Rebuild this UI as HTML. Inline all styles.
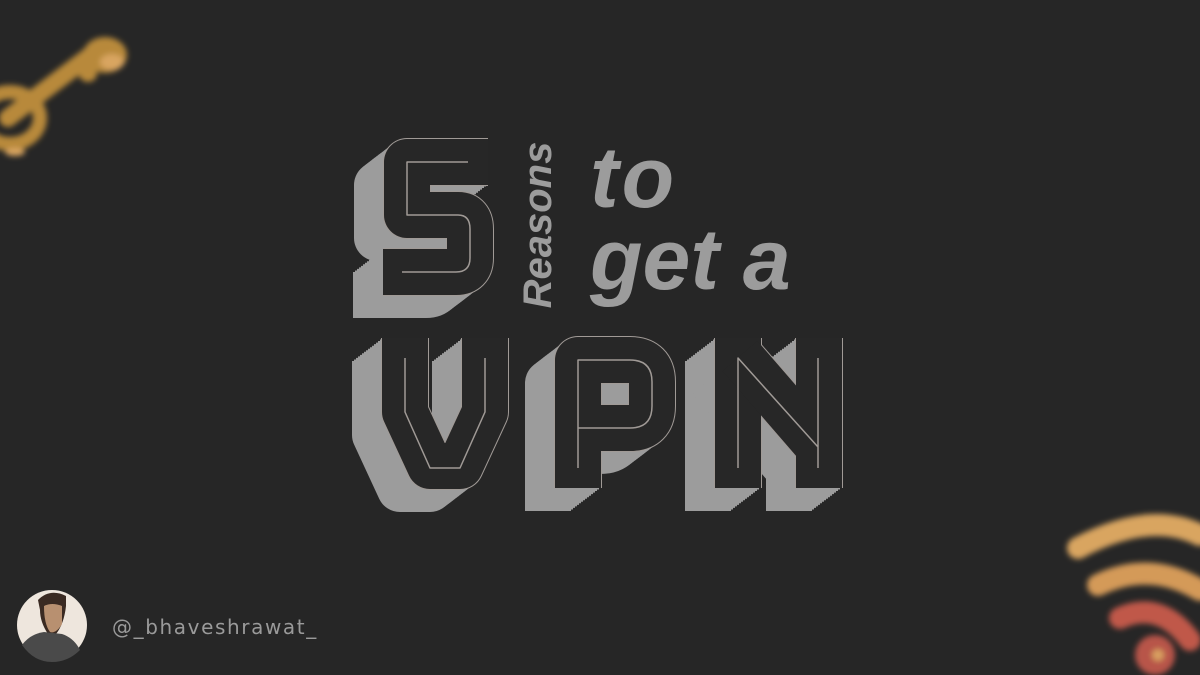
<!DOCTYPE html>
<html><head><meta charset="utf-8"><style>
html,body{margin:0;padding:0;background:#262626;}
body{width:1200px;height:675px;overflow:hidden;position:relative;font-family:"Liberation Sans",sans-serif;}
.t{position:absolute;color:#9c9c9c;font-weight:bold;font-style:italic;white-space:nowrap;line-height:1;}
</style></head><body>
<svg width="1200" height="675" style="position:absolute;left:0;top:0">
<defs>
<filter id="bl" x="-50%" y="-50%" width="200%" height="200%"><feGaussianBlur stdDeviation="3"/></filter>
<g id="S">
<path d="M488,162 H407 V215 H458 Q470,215 470,229 V258 Q470,272 456,272 H383"/>
<path d="M405,338 V412 L430,466 H460 L485,412 V338"/>
<path d="M578,488 V360 H630 Q652,360 652,382 V406 Q652,428 630,428 H578"/>
<path d="M738,488 V338"/>
<path d="M740,356 L818,446"/>
<path d="M819,338 V488"/>
</g>
</defs>
<!-- key -->
<g filter="url(#bl)">
<path d="M8,118 L100,48" stroke="#b8893a" stroke-width="18" stroke-linecap="round" fill="none"/>
<ellipse cx="105" cy="55" rx="22" ry="18" fill="#b8893a"/>
<ellipse cx="112" cy="62" rx="12" ry="8" fill="#d9a560"/>
<ellipse cx="88" cy="74" rx="9" ry="8" fill="#b8893a"/>
<ellipse cx="10" cy="118" rx="30" ry="26" fill="none" stroke="#b8893a" stroke-width="14"/>
<ellipse cx="15" cy="152" rx="10" ry="4" fill="#d9a560"/>
</g>
<!-- wifi -->
<g filter="url(#bl)" fill="none" stroke-linecap="round">
<path d="M1078,548 Q1150,510 1200,535" stroke="#d9a560" stroke-width="22"/>
<path d="M1098,585 Q1150,560 1200,590" stroke="#d49a58" stroke-width="22"/>
<path d="M1120,618 Q1160,600 1190,640" stroke="#c0584a" stroke-width="22"/>
<circle cx="1155" cy="655" r="20" fill="#b8544a" stroke="none"/>
<circle cx="1158" cy="655" r="6" fill="#d9a060" stroke="none"/>
</g>
<!-- extrusion -->
<g fill="none" stroke="#9c9c9c" stroke-width="46" stroke-linejoin="round" stroke-linecap="butt">
<use href="#S" transform="translate(-2,1.5)"/>
<use href="#S" transform="translate(-4,3)"/>
<use href="#S" transform="translate(-6,4.6)"/>
<use href="#S" transform="translate(-8,6.1)"/>
<use href="#S" transform="translate(-10,7.7)"/>
<use href="#S" transform="translate(-12,9.2)"/>
<use href="#S" transform="translate(-14,10.7)"/>
<use href="#S" transform="translate(-16,12.3)"/>
<use href="#S" transform="translate(-18,13.8)"/>
<use href="#S" transform="translate(-20,15.3)"/>
<use href="#S" transform="translate(-22,16.9)"/>
<use href="#S" transform="translate(-24,18.4)"/>
<use href="#S" transform="translate(-26,19.9)"/>
<use href="#S" transform="translate(-28,21.5)"/>
<use href="#S" transform="translate(-30,23)"/>
</g>
<rect x="596" y="376" width="38" height="38" fill="#9c9c9c"/>
<!-- front -->
<g fill="none" stroke="#a09a96" stroke-width="48" stroke-linejoin="round" stroke-linecap="butt"><use href="#S"/></g>
<g fill="none" stroke="#272727" stroke-width="46" stroke-linejoin="round" stroke-linecap="butt"><use href="#S"/></g>
<!-- inlines -->
<g fill="none" stroke="#a09a96" stroke-width="1.5" stroke-linejoin="round">
<path d="M468,162 H407 V215 H458 Q470,215 470,229 V258 Q470,272 456,272 H402"/>
<path d="M405,358 V412 L430,468 H460 L485,412 V358"/>
<path d="M578,468 V360 H630 Q652,360 652,382 V406 Q652,428 630,428 H578"/>
<path d="M738,468 V358 L818,447 M818,358 V468"/>
</g>
<!-- avatar -->
<circle cx="52" cy="625" r="35" fill="#eee6dd"/>
<path d="M38,600 Q50,588 66,596 L66,606 Q64,624 56,634 L48,634 Q40,622 40,610 Z" fill="#3a2a22"/>
<path d="M44,606 Q52,602 62,606 L62,624 Q56,634 50,632 Q44,624 44,606 Z" fill="#b89070"/>
<path d="M22,645 Q30,634 44,632 L62,634 Q74,638 80,650 Q68,662 52,662 Q34,662 22,645 Z" fill="#4a4a4a"/>
</svg>
<div class="t" style="left:538px;top:225px;font-size:40px;transform:translate(-50%,-50%) rotate(-90deg);">Reasons</div>
<div class="t" style="left:590px;top:135px;font-size:86px;letter-spacing:3px;">to</div>
<div class="t" style="left:590px;top:217px;font-size:86px;letter-spacing:0px;">get a</div>
<div style="position:absolute;left:112px;top:615px;font-size:20px;color:#9a9a9a;letter-spacing:1.6px;font-family:'DejaVu Sans','Liberation Sans',sans-serif;">@_bhaveshrawat_</div>
</body></html>
